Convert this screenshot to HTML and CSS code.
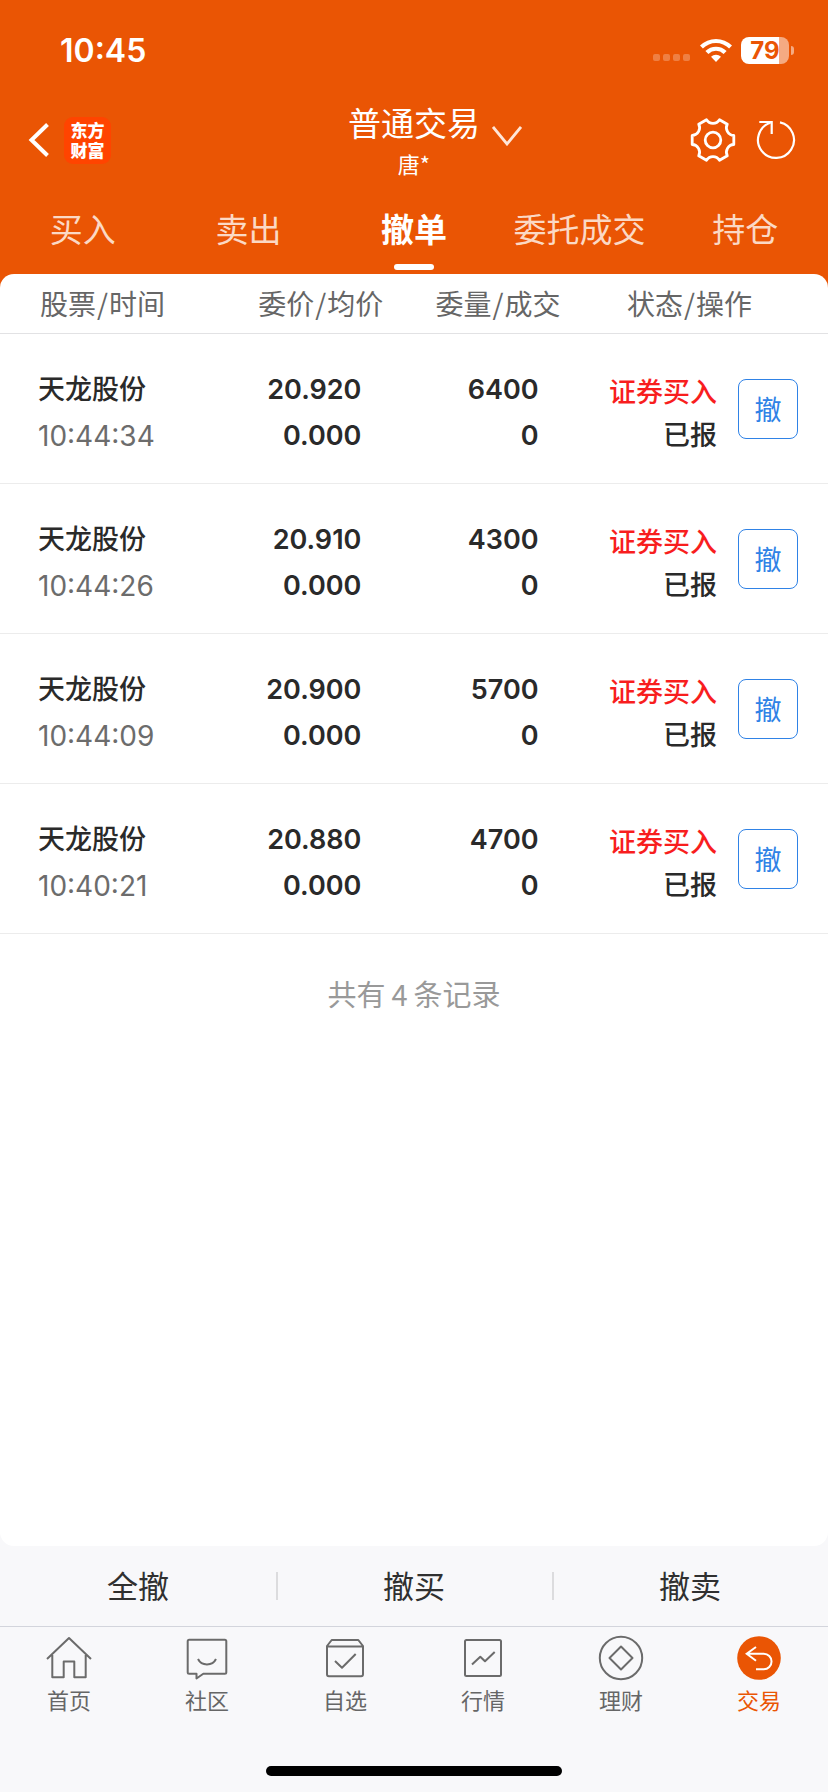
FILE: index.html
```html
<!DOCTYPE html>
<html lang="zh-CN">
<head>
<meta charset="utf-8">
<meta name="viewport" content="width=device-width, initial-scale=1">
<title>普通交易 - 撤单</title>
<link rel="stylesheet" href="styles.css">
</head>
<body>
<header class="top">
  <div class="status">
    <time class="clock">10:45</time>
    <div class="status-icons">
      <span class="dots"><i></i><i></i><i></i><i></i></span>
      <svg class="wifi" viewBox="0 0 32 24" width="32" height="24" aria-label="Wi-Fi">
        <path d="M0 7.6 2.9 10.5A18.6 18.6 0 0 1 29.1 10.5L32 7.6A22.6 22.6 0 0 0 0 7.6Z"/>
        <path d="M5.4 13 8.4 15.900A10.900 10.900 0 0 1 23.600 15.900L26.600 13A15.200 15.200 0 0 0 5.400 13Z"/>
        <path d="M11 18.700 16 24 21 18.700A7.200 7.200 0 0 0 11 18.700Z"/>
      </svg>
      <span class="battery"><span class="battery-body">79</span><span class="battery-tip"></span></span>
    </div>
  </div>
  <div class="bar">
    <div class="bar-left">
      <button class="icon-btn" aria-label="返回">
        <svg viewBox="0 0 22 36" width="22" height="36"><path d="M19.500 2.500 3.500 18 19.500 33.500" fill="none" stroke="#fff" stroke-width="4"/></svg>
      </button>
      <span class="logo">东方<br>财富</span>
    </div>
    <button class="account">
      <span class="account-text"><span class="account-type">普通交易</span><span class="account-name">唐*</span></span>
      <svg class="chevron" viewBox="0 0 30 20" width="30" height="20"><path d="M1 1 15 18 29 1" fill="none" stroke="#ffe6d8" stroke-width="2.800"/></svg>
    </button>
    <div class="bar-right">
      <button class="icon-btn" aria-label="设置">
        <svg viewBox="-23 -23 46 46" width="46" height="46" fill="none" stroke="#fff" stroke-width="2.800" stroke-linejoin="round"><path d="M20.800-4.500V4.500C15.200 4.700 11.700 10.800 14.300 15.800L6.500 20.300C3.500 15.500-3.500 15.500-6.500 20.300L-14.300 15.800C-11.700 10.800-15.200 4.700-20.800 4.500V-4.500C-15.200-4.700-11.700-10.800-14.300-15.800L-6.500-20.300C-3.500-15.500 3.500-15.500 6.500-20.300L14.300-15.800C11.700-10.800 15.200-4.700 20.800-4.500Z"/><circle r="7.800"/></svg>
      </button>
      <button class="icon-btn" aria-label="刷新">
        <svg viewBox="-20 -20 40 40" width="40" height="40" fill="none" stroke="#fff" stroke-width="2.200"><path d="M4-17.600A18 18 0 1 1-5.500-17.200"/><path d="M-16.700-18H-4.300V-6"/></svg>
      </button>
    </div>
  </div>
  <nav class="tabs" aria-label="交易">
    <a href="#">买入</a>
    <a href="#">卖出</a>
    <a href="#" class="active" aria-current="page">撤单</a>
    <a href="#">委托成交</a>
    <a href="#">持仓</a>
  </nav>
</header>

<main class="main">
  <div class="sheet">
    <table class="orders">
      <thead>
        <tr><th class="c-stock">股票<span class="slash">/</span>时间</th><th class="c-price">委价<span class="slash">/</span>均价</th><th class="c-qty">委量<span class="slash">/</span>成交</th><th class="c-state">状态<span class="slash">/</span>操作</th></tr>
      </thead>
      <tbody>
        <tr>
          <td><div class="name">天龙股份</div><div class="time">10:44:34</div></td>
          <td class="num"><div>20.920</div><div>0.000</div></td>
          <td class="num"><div>6400</div><div>0</div></td>
          <td><div class="op"><div class="state"><div class="buy">证券买入</div><div>已报</div></div><button class="cancel">撤</button></div></td>
        </tr>
        <tr>
          <td><div class="name">天龙股份</div><div class="time">10:44:26</div></td>
          <td class="num"><div>20.910</div><div>0.000</div></td>
          <td class="num"><div>4300</div><div>0</div></td>
          <td><div class="op"><div class="state"><div class="buy">证券买入</div><div>已报</div></div><button class="cancel">撤</button></div></td>
        </tr>
        <tr>
          <td><div class="name">天龙股份</div><div class="time">10:44:09</div></td>
          <td class="num"><div>20.900</div><div>0.000</div></td>
          <td class="num"><div>5700</div><div>0</div></td>
          <td><div class="op"><div class="state"><div class="buy">证券买入</div><div>已报</div></div><button class="cancel">撤</button></div></td>
        </tr>
        <tr>
          <td><div class="name">天龙股份</div><div class="time">10:40:21</div></td>
          <td class="num"><div>20.880</div><div>0.000</div></td>
          <td class="num"><div>4700</div><div>0</div></td>
          <td><div class="op"><div class="state"><div class="buy">证券买入</div><div>已报</div></div><button class="cancel">撤</button></div></td>
        </tr>
      </tbody>
    </table>
    <p class="total">共有<span class="count">4</span>条记录</p>
  </div>
</main>

<footer class="bottom">
  <div class="actions">
    <button>全撤</button>
    <button>撤买</button>
    <button>撤卖</button>
  </div>
  <nav class="nav" aria-label="主导航">
    <a href="#">
      <svg viewBox="-24 -24 48 48" width="48" height="48"><path d="M-22 1 0-20 22 1M-16.700-3V19.300H-5.300V3.500H5.300V19.300H16.700V-3"/></svg>
      <span>首页</span>
    </a>
    <a href="#">
      <svg viewBox="-24 -24 48 48" width="48" height="48"><path d="M-17.800-18.300H17.800Q19.300-18.300 19.300-16.800V14.200Q19.300 15.700 17.800 15.700H-3.700L-10.500 20.500V15.700H-17.800Q-19.300 15.700-19.300 14.200V-16.800Q-19.300-18.300-17.800-18.300ZM-9 1C-5.500 8.200 5.500 8.200 9 1"/></svg>
      <span>社区</span>
    </a>
    <a href="#">
      <svg viewBox="-24 -24 48 48" width="48" height="48"><path d="M-18-12-13.300-18H13.300L18-12V16.300Q18 18.200 16.100 18.200H-16.100Q-18 18.200-18 16.300ZM-18-11.500H18M-10 3-3 9.700 10.700-4"/></svg>
      <span>自选</span>
    </a>
    <a href="#">
      <svg viewBox="-24 -24 48 48" width="48" height="48"><rect x="-18" y="-18" width="36" height="36" rx="1.500"/><path d="M-11 6.500-2.700-1.300 2 3.300 11.700-6"/></svg>
      <span>行情</span>
    </a>
    <a href="#">
      <svg viewBox="-24 -24 48 48" width="48" height="48"><circle r="21.200"/><path d="M0-11.500 11.500 0 0 11.500-11.500 0Z"/></svg>
      <span>理财</span>
    </a>
    <a href="#" class="current" aria-current="page">
      <svg viewBox="-24 -24 48 48" width="48" height="48"><circle class="disc" r="21.800"/><path class="turn" d="M-3-11-12.300-4.200-3 2.700M-12-4.200H4.800A7.750 7.750 0 0 1 4.800 11.300H-3"/></svg>
      <span>交易</span>
    </a>
  </nav>
  <div class="home-indicator"></div>
</footer>
</body>
</html>
```

FILE: styles.css
```css
:root {
  --brand: #ea5504;
  --bg: #f8f8fa;
  --ink: #2a2a2a;
  --muted: #666;
  --cjk: "Noto Sans CJK SC", sans-serif;
}

* { box-sizing: border-box; }

body {
  margin: 0;
  min-height: 100vh;
  display: flex;
  flex-direction: column;
  background: var(--bg);
  color: var(--ink);
  font-family: Inter, "Noto Sans CJK SC", sans-serif;
}

button {
  border: 0;
  padding: 0;
  background: none;
  color: inherit;
  font: inherit;
}

a { color: inherit; text-decoration: none; }
svg { display: block; }

/* Header */
.top { background: var(--brand); color: #fff; }

.status {
  display: flex;
  justify-content: space-between;
  align-items: center;
  height: 100px;
  padding: 0 34px 0 60px;
}
.clock { padding-top: 2px; font-size: 32px; line-height: 40px; font-weight: 600; }
.status-icons { display: flex; align-items: center; }
.dots { display: flex; gap: 3px; padding-top: 15px; margin-right: 10px; }
.dots i { width: 7px; height: 7px; border-radius: 2px; background: #fff; opacity: .25; }
.wifi { fill: #fff; margin-right: 9px; }
.battery { display: flex; align-items: center; gap: 2px; }
.battery-body {
  width: 48px;
  height: 27px;
  border-radius: 8px;
  background: linear-gradient(to right, #fff 80%, #f5aa82 80%);
  color: var(--brand);
  font-size: 24px;
  line-height: 27px;
  font-weight: 700;
  text-align: center;
}
.battery-tip { width: 3px; height: 9px; border-radius: 0 4px 4px 0; background: #f5aa82; }

.bar {
  display: grid;
  grid-template-columns: 1fr auto 1fr;
  align-items: center;
  height: 80px;
  padding: 0 32px 0 28px;
}
.bar-left { display: flex; align-items: center; gap: 14px; }
.bar-right { display: flex; align-items: center; justify-content: flex-end; gap: 20px; }
.logo {
  width: 47px;
  height: 47px;
  padding: 3px 0;
  border-radius: 9px;
  background: #ff4400;
  font: 900 17px/20px var(--cjk);
  text-align: center;
}
.account {
  display: flex;
  align-items: center;
  gap: 12px;
  padding-left: 46px;
  font-family: var(--cjk);
}
.account-text { display: flex; flex-direction: column; align-items: center; gap: 2px; }
.account-type { font-size: 33px; line-height: 44px; }
.account-name { font-size: 22px; line-height: 34px; }
.chevron { margin-bottom: 8px; }

.tabs { display: flex; height: 94px; }
.tabs a {
  flex: 1;
  display: flex;
  flex-direction: column;
  align-items: center;
  padding-top: 28px;
  font: 400 33px/40px var(--cjk);
  color: #fbd9c5;
}
.tabs .active { color: #fff; font-weight: 700; }
.tabs .active::after {
  content: "";
  width: 40px;
  height: 6px;
  margin-top: 16px;
  border-radius: 3px;
  background: #fff;
}

/* Orders */
.main {
  flex: 1;
  display: flex;
  flex-direction: column;
  background: linear-gradient(var(--brand) 20px, var(--bg) 20px);
}
.sheet { flex: 1; border-radius: 14px; background: #fff; overflow: hidden; }

.orders { width: 100%; border-collapse: collapse; table-layout: fixed; }
.orders th {
  height: 59px;
  padding: 0;
  border-bottom: 1px solid #e2e2e4;
  color: var(--muted);
  font: 400 28px/40px var(--cjk);
  text-align: right;
  white-space: nowrap;
}
.orders .c-stock { width: 24%; padding-left: 40px; text-align: left; }
.orders .c-price { width: 22.3%; }
.orders .c-qty { width: 21.4%; }
.orders .c-state { padding-right: 76px; }
.slash { padding: 0 1px; }
.orders td {
  height: 150px;
  padding: 33px 0 24px;
  border-bottom: 1px solid #ececec;
  font-size: 28px;
  line-height: 46px;
  vertical-align: top;
  white-space: nowrap;
}
.orders td:first-child { padding-left: 38px; }
.name { font-size: 27px; font-weight: 500; }
.time { color: #6c6c6c; }
.orders .num { padding-right: 22px; font-size: 27px; font-weight: 600; text-align: right; }
.op { display: flex; justify-content: flex-end; align-items: center; gap: 21px; padding-right: 30px; }
.state { padding-top: 4px; font-size: 27px; line-height: 43px; font-weight: 500; text-align: right; }
.buy { color: #f81e1e; }
.cancel {
  width: 60px;
  height: 60px;
  margin-bottom: 6px;
  border: 1px solid #2f82e6;
  border-radius: 8px;
  color: #2f82e6;
  font: 400 27px/40px var(--cjk);
}

.total {
  margin: 0;
  padding: 37px 0;
  color: #999;
  font: 400 29px/44px var(--cjk);
  text-align: center;
}
.count { padding: 0 6px; }

/* Bottom */
.actions { display: grid; grid-template-columns: repeat(3, 1fr); height: 80px; }
.actions button {
  display: flex;
  align-items: center;
  justify-content: center;
  padding-bottom: 3px;
  font: 400 31px/44px var(--cjk);
  color: #303030;
}
.actions button + button { background: linear-gradient(#dcdcde, #dcdcde) left center / 2px 28px no-repeat; }

.nav {
  display: flex;
  height: 140px;
  padding-top: 7px;
  border-top: 1px solid #d3d5dc;
  color: var(--muted);
}
.nav a {
  flex: 1;
  display: flex;
  flex-direction: column;
  align-items: center;
  gap: 2px;
  font: 400 22px/30px var(--cjk);
}
.nav svg { fill: none; stroke: #6b6b6b; stroke-width: 2; stroke-linejoin: round; }
.nav .current { color: var(--brand); }
.nav .disc { fill: var(--brand); stroke: none; }
.nav .turn { stroke: #fff; stroke-linejoin: miter; }

.home-indicator {
  width: 296px;
  height: 10px;
  margin: 0 auto 16px;
  border-radius: 5px;
  background: #000;
}
```
